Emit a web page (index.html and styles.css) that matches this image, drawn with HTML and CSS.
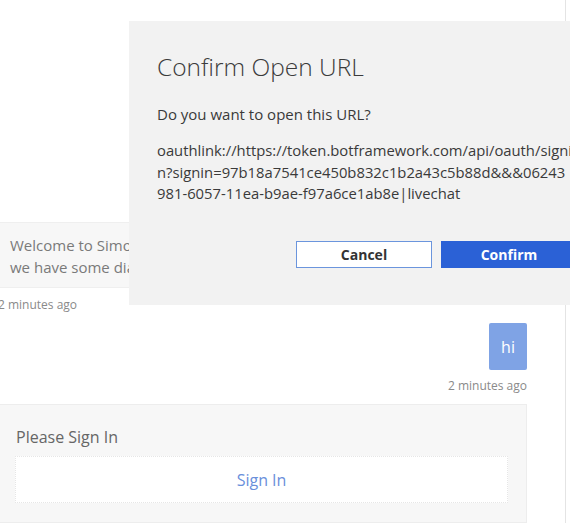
FILE: index.html
```html
<!DOCTYPE html>
<html>
<head>
<meta charset="utf-8">
<link rel="stylesheet" href="styles.css">
</head>
<body>
<div class="page">
  <div class="transcript">
    <div class="bot-card">
      <span class="line">Welcome to Simon's sample bot! Before we start,</span>
      <span class="line">we have some dialogs to walk you through.</span>
    </div>
    <div class="time time-left">2 minutes ago</div>
    <div class="user-row"><div class="bubble">hi</div></div>
    <div class="time time-right">2 minutes ago</div>
    <div class="signin-card">
      <div class="signin-title">Please Sign In</div>
      <div class="signin-button">Sign In</div>
    </div>
  </div>
</div>
<div class="dialog">
  <div class="dialog-title">Confirm Open URL</div>
  <div class="dialog-question">Do you want to open this URL?</div>
  <div class="dialog-url">
    <span class="url-line">oauthlink://https://token.botframework.com/api/oauth/signi</span>
    <span class="url-line">n?signin=97b18a7541ce450b832c1b2a43c5b88d&amp;&amp;&amp;06243</span>
    <span class="url-line">981-6057-11ea-b9ae-f97a6ce1ab8e|livechat</span>
  </div>
  <div class="dialog-actions">
    <button class="btn btn-cancel">Cancel</button>
    <button class="btn btn-confirm">Confirm</button>
  </div>
</div>
</body>
</html>
```
FILE: styles.css
```css
html, body {
  margin: 0;
  padding: 0;
  background: #ffffff;
  overflow: hidden;
  width: 570px;
  height: 523px;
  font-family: "Open Sans", "Noto Sans", sans-serif;
}

.page {
  position: relative;
  width: 566px;
  height: 523px;
  box-sizing: border-box;
  border-right: 1px solid #e4e4e4;
}

.transcript {
  display: flex;
  flex-direction: column;
  padding: 222px 38px 0 0;
}

.bot-card {
  margin-left: -6px;
  width: 320px;
  height: 66px;
  box-sizing: border-box;
  background: #f7f7f7;
  border: 1px solid #efefef;
  padding: 11px 0 0 15px;
  overflow: hidden;
  display: flex;
  flex-direction: column;
}

.bot-card .line {
  display: block;
  white-space: nowrap;
  font-size: 15px;
  line-height: 22px;
  color: #7a7a7a;
}

.time {
  font-size: 12px;
  line-height: 16px;
  color: #8a8a8a;
}

.time-left {
  margin: 9px 0 0 -2px;
}

.user-row {
  display: flex;
  justify-content: flex-end;
  margin-top: 10px;
}

.bubble {
  width: 38px;
  height: 47px;
  border-radius: 2px;
  background: #7fa3e5;
  color: #ffffff;
  font-size: 16px;
  display: flex;
  align-items: center;
  justify-content: center;
}

.time-right {
  margin-top: 8px;
  text-align: right;
}

.signin-card {
  margin-top: 10px;
  height: 119px;
  box-sizing: border-box;
  background: #f7f7f7;
  border: 1px solid #ededed;
  border-left: none;
  padding: 21px 18px 0 15px;
}

.signin-title {
  font-size: 16px;
  line-height: 22px;
  color: #666666;
  padding-left: 1px;
}

.signin-button {
  margin-top: 8px;
  height: 47px;
  box-sizing: border-box;
  background: #ffffff;
  border: 1px dotted #e6e6e6;
  display: flex;
  align-items: center;
  justify-content: center;
  font-size: 16px;
  color: #6a8fdb;
}

.dialog {
  position: absolute;
  left: 129px;
  top: 21px;
  width: 476px;
  height: 284px;
  box-sizing: border-box;
  background: #f2f2f2;
  padding: 31px 28px 0 28px;
  color: #333333;
}

.dialog-title {
  font-size: 24.5px;
  font-weight: 300;
  line-height: 30px;
  color: #3b3b3b;
}

.dialog-question {
  margin-top: 22px;
  font-size: 15px;
  line-height: 21px;
  color: #3a3a3a;
}

.dialog-url {
  margin-top: 15px;
  font-size: 14.8px;
  line-height: 21.5px;
  color: #3a3a3a;
}

.url-line {
  display: block;
  white-space: nowrap;
}

.dialog-actions {
  display: flex;
  justify-content: flex-end;
  gap: 9px;
  margin-top: 36px;
}

.btn {
  width: 136px;
  height: 27px;
  box-sizing: border-box;
  font-family: "Open Sans", "Noto Sans", sans-serif;
  font-size: 14px;
  font-weight: 700;
  padding: 0;
  cursor: pointer;
}

.btn-cancel {
  background: #ffffff;
  border: 1px solid #6b95dd;
  color: #333333;
}

.btn-confirm {
  background: #2b61d6;
  border: 1px solid #2b61d6;
  color: #ffffff;
}
```
